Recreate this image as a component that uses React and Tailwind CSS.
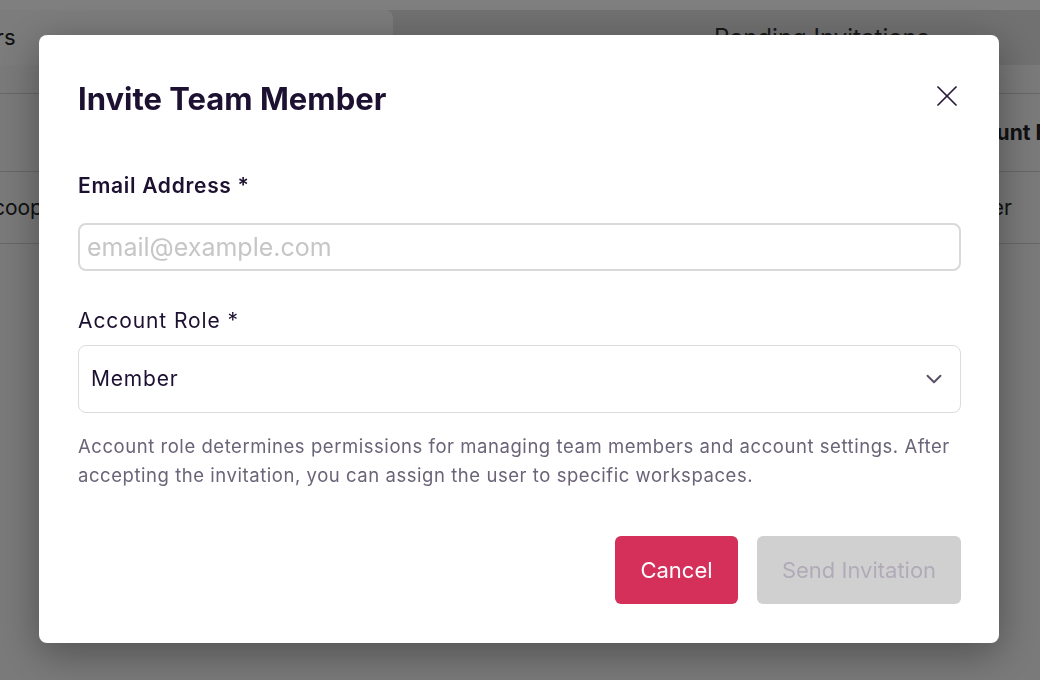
import React, { useState } from 'react';
import { X, ChevronDown } from 'lucide-react';

function FondoPagina() {
  return (
    <div className="min-h-screen bg-[#f4f4f4] text-[#222]">
      <div className="h-[10px] bg-white" />
      <div className="flex h-[55px] bg-[#e2e2e2]">
        <div className="w-[393px] bg-[#f9f9f9] rounded-tr-lg flex items-center overflow-hidden">
          <span className="ml-[-146px] text-[22px] whitespace-nowrap">Team Members</span>
        </div>
        <div className="flex-1 flex items-center pl-[321px]">
          <span className="text-[24px] text-[#333] whitespace-nowrap">Pending Invitations</span>
        </div>
      </div>
      <div className="h-[29px] border-b border-[#cfcfcf]" />
      <div className="h-[78px] border-b border-[#cfcfcf] flex items-center justify-end overflow-hidden">
        <span className="mr-[-40px] text-[21px] font-bold whitespace-nowrap">Account Role</span>
      </div>
      <div className="h-[72px] border-b border-[#cfcfcf] flex items-center justify-between overflow-hidden">
        <span className="ml-[-24px] text-[21px] whitespace-nowrap">jacooper@example.com</span>
        <span className="mr-[28px] text-[21px] whitespace-nowrap">Member</span>
      </div>
    </div>
  );
}

export default function App() {
  const [email, setEmail] = useState('');
  const [rol, setRol] = useState('Member');

  return (
    <div className="relative font-['Inter','Liberation_Sans',sans-serif]">
      <FondoPagina />

      <div className="fixed inset-0 bg-black/50 flex justify-center items-start pt-[35px] pr-[2px]">
        <div className="w-[960px] bg-white rounded-lg shadow-[0_10px_40px_rgba(0,0,0,0.35)] pt-[39px] pb-[39px] pl-[39px] pr-[38px] text-[#1c1130]">
          <div className="flex items-center justify-between">
            <h2 className="text-[31px] leading-[50px] font-bold">Invite Team Member</h2>
            <button className="w-[36px] h-[36px] flex items-center justify-center text-[#2a1a3a] mb-[6px] mr-[-4px]">
              <X size={36} strokeWidth={1.15} />
            </button>
          </div>

          <label className="block mt-[47px] text-[21px] leading-[30px] font-semibold tracking-[0.7px]">Email Address *</label>
          <input
            type="email"
            placeholder="email@example.com"
            value={email}
            onChange={e => setEmail(e.target.value)}
            className="mt-[22px] w-full h-[48px] border-2 border-[#d9d9d9] rounded-lg px-[7px] text-[25px] text-[#1c1130] placeholder:text-[#c6c6c6] outline-none"
          />

          <label className="block mt-[35px] text-[21px] leading-[30px] tracking-[0.9px]">Account Role *</label>
          <div className="relative mt-[9px]">
            <select
              value={rol}
              onChange={e => setRol(e.target.value)}
              className="appearance-none w-full h-[68px] border border-[#dcdcdc] rounded-lg pl-[12px] text-[21px] tracking-[0.8px] text-[#1c1130] bg-white outline-none"
            >
              <option>Member</option>
              <option>Admin</option>
              <option>Owner</option>
            </select>
            <ChevronDown size={26} strokeWidth={1.8} className="absolute right-[14px] top-[21px] text-[#5a4f66] pointer-events-none" />
          </div>

          <p className="mt-[19px] text-[18.5px] leading-[29px] tracking-[0.55px] text-[#6b6478]">
            Account role determines permissions for managing team members and account settings. After accepting the invitation, you can assign the user to specific workspaces.
          </p>

          <div className="mt-[46px] flex justify-end gap-[19px]">
            <button className="w-[123px] h-[68px] rounded-md bg-[#d4305a] text-white text-[22px]">Cancel</button>
            <button disabled className="w-[204px] h-[68px] rounded-md bg-[#d0d0d0] text-[#b1abb8] text-[22px]">Send Invitation</button>
          </div>
        </div>
      </div>
    </div>
  );
}
